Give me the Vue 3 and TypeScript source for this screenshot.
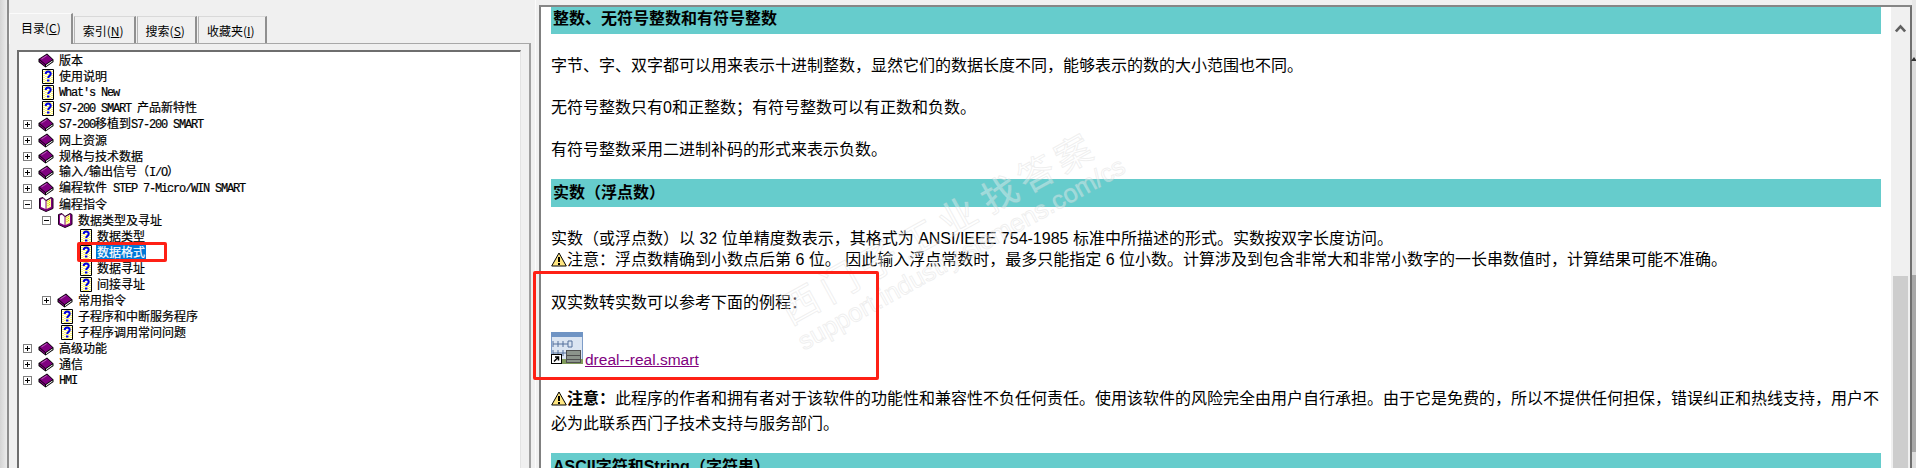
<script setup lang="ts">
type Kind = 'book' | 'open' | 'help'
interface Row {
  text: string
  level: number
  kind: Kind
  box?: '+' | '-'
  selected?: boolean
}

const rows: Row[] = [
  { text: '版本', level: 0, kind: 'book' },
  { text: '使用说明', level: 0, kind: 'help' },
  { text: "What's New", level: 0, kind: 'help' },
  { text: 'S7-200 SMART 产品新特性', level: 0, kind: 'help' },
  { text: 'S7-200移植到S7-200 SMART', level: 0, kind: 'book', box: '+' },
  { text: '网上资源', level: 0, kind: 'book', box: '+' },
  { text: '规格与技术数据', level: 0, kind: 'book', box: '+' },
  { text: '输入/输出信号（I/O）', level: 0, kind: 'book', box: '+' },
  { text: '编程软件 STEP 7-Micro/WIN SMART', level: 0, kind: 'book', box: '+' },
  { text: '编程指令', level: 0, kind: 'open', box: '-' },
  { text: '数据类型及寻址', level: 1, kind: 'open', box: '-' },
  { text: '数据类型', level: 2, kind: 'help' },
  { text: '数据格式', level: 2, kind: 'help', selected: true },
  { text: '数据寻址', level: 2, kind: 'help' },
  { text: '间接寻址', level: 2, kind: 'help' },
  { text: '常用指令', level: 1, kind: 'book', box: '+' },
  { text: '子程序和中断服务程序', level: 1, kind: 'help' },
  { text: '子程序调用常问问题', level: 1, kind: 'help' },
  { text: '高级功能', level: 0, kind: 'book', box: '+' },
  { text: '通信', level: 0, kind: 'book', box: '+' },
  { text: 'HMI', level: 0, kind: 'book', box: '+' },
]

const tabs = [
  { label: '目录', key: 'C', active: true },
  { label: '索引', key: 'N', active: false },
  { label: '搜索', key: 'S', active: false },
  { label: '收藏夹', key: 'I', active: false },
]

function parts(text: string): { t: string; latin: boolean }[] {
  return text
    .split(/([\x20-\x7e]+)/)
    .filter((s) => s.length > 0)
    .map((s) => ({ t: s, latin: /^[\x20-\x7e]+$/.test(s) }))
}
</script>

<template>
  <div class="app">
    <div class="edge"></div>

    <aside class="nav">
      <div class="tabs">
        <div v-for="tab in tabs" :key="tab.key" class="tab" :class="{ active: tab.active }">
          {{ tab.label }}(<u>{{ tab.key }}</u>)
        </div>
      </div>
      <div class="panel">
        <div class="tree">
          <div
            v-for="row in rows"
            :key="row.text"
            class="row"
            :class="'lv' + row.level"
          >
            <span class="box">
              <svg v-if="row.box" width="9" height="9" viewBox="0 0 9 9">
                <rect x=".5" y=".5" width="8" height="8" fill="#fff" stroke="#808080" />
                <path d="M2 4.500h5" stroke="#000" />
                <path v-if="row.box === '+'" d="M4.500 2v5" stroke="#000" />
              </svg>
            </span>
            <span class="ico">
              <svg v-if="row.kind === 'book'" width="16" height="15" viewBox="0 0 16 15">
                <path d="M.5 6 9 .5l6.500 6v2.500l-8 5.500-7-5.500z" fill="#000" />
                <path d="M1.500 6 9 1.500 14.500 6.500l-7 4.800z" fill="#800080" />
                <path d="M1.500 7 7 11.800v1.500L1.500 8.600z" fill="#800080" />
                <path d="m8 12 6.500-4.400v1L8 13.200z" fill="#fff" />
                <path d="M3.500 6 8.800 2.600" stroke="#b860b8" />
              </svg>
              <svg v-else-if="row.kind === 'open'" width="16" height="15" viewBox="0 0 16 15">
                <path d="M1.500 1.500 5 .5l3 3 5-3 2 1v10l-7 3-6.500-3z" fill="#800080" stroke="#200020" />
                <path d="M3 2.500 5 1.500l2.500 2.500v8L3 10z" fill="#fff" />
                <path d="M8.500 4 13 1.500V10l-4.500 2z" fill="#ffffa0" />
                <path d="M10 4v6M11.500 3v6" stroke="#d8d800" stroke-dasharray="1 1" />
              </svg>
              <svg v-else width="12" height="15" viewBox="0 0 12 15">
                <path d="M.5 .5h11v14H.5z" fill="#fff" stroke="#000" />
                <path d="M2 2v11M4 1v13M6 1v13M8 1v13M10 2v11" stroke="#ffee00" stroke-width="1.100" stroke-dasharray="1 1" />
                <path d="M3.700 5c0-3.500 5-3.500 5 0 0 1.800-2.500 2-2.500 4" fill="none" stroke="#0000e0" stroke-width="2" />
                <path d="M5 10.500h2.400v2H5z" fill="#0000e0" />
              </svg>
            </span>
            <span class="label" :class="{ selected: row.selected }"><template v-for="(p, i) in parts(row.text)" :key="i"><span v-if="p.latin" class="latin">{{ p.t }}</span><template v-else>{{ p.t }}</template></template></span>
          </div>
        </div>
      </div>
    </aside>
    <div class="divider"></div>

    <main class="doc">
      <div class="page">
        <h2 class="band first">整数、无符号整数和有符号整数</h2>
        <p class="gap21">字节、字、双字都可以用来表示十进制整数，显然它们的数据长度不同，能够表示的数的大小范围也不同。</p>
        <p class="gap21">无符号整数只有0和正整数；有符号整数可以有正数和负数。</p>
        <p class="gap21">有符号整数采用二进制补码的形式来表示负数。</p>

        <h2 class="band second">实数（浮点数）</h2>
        <p class="gap21">实数（或浮点数）以 32 位单精度数表示，其格式为 ANSI/IEEE 754-1985 标准中所描述的形式。实数按双字长度访问。<br />
          <svg class="warn" width="16" height="15" viewBox="0 0 16 15">
            <path d="M8 1 15.300 14H.7z" fill="#ffe680" stroke="#000" stroke-linejoin="round" />
            <path d="M8 5v5" stroke="#000" stroke-width="2" />
            <path d="M7 11h2v2H7z" fill="#000" />
          </svg>注意：浮点数精确到小数点后第 6 位。 因此输入浮点常数时，最多只能指定 6 位小数。计算涉及到包含非常大和非常小数字的一长串数值时，计算结果可能不准确。</p>
        <p class="gap22">双实数转实数可以参考下面的例程：</p>
        <div class="attachment">
          <svg width="32" height="32" viewBox="0 0 32 32">
            <rect width="32" height="32" fill="#dbe5f2" />
            <rect x=".5" y=".5" width="31" height="31" fill="none" stroke="#7d9cc8" />
            <rect width="32" height="5" fill="#6f94c4" />
            <path d="M2 9v6M2 12h15M7 9v6M12 9v6M17 9h4v6h-4zM2 18v6M2 21h13M7 18v6M12 18v6" fill="none" stroke="#54709c" />
            <rect y="27" width="32" height="5" fill="#7f9a5a" />
            <rect x="15.500" y="18.500" width="14" height="12" fill="#8c948c" stroke="#505050" />
            <path d="M15.500 23.500h14M15.500 27.500h14" stroke="#505050" />
            <rect x=".5" y="22.500" width="10" height="9" fill="#fff" stroke="#000" />
            <path d="M3 29.500 7 25.500M4 25h3.500v3.500" fill="none" stroke="#000" stroke-width="1.500" />
          </svg>
          <a class="link">dreal--real.smart</a>
        </div>
        <p class="note">
          <svg class="warn" width="16" height="15" viewBox="0 0 16 15">
            <path d="M8 1 15.300 14H.7z" fill="#ffe680" stroke="#000" stroke-linejoin="round" />
            <path d="M8 5v5" stroke="#000" stroke-width="2" />
            <path d="M7 11h2v2H7z" fill="#000" />
          </svg><b>注意：</b>此程序的作者和拥有者对于该软件的功能性和兼容性不负任何责任。使用该软件的风险完全由用户自行承担。由于它是免费的，所以不提供任何担保，错误纠正和热线支持，用户不必为此联系西门子技术支持与服务部门。</p>
        <h2 class="band third">ASCII字符和String（字符串）</h2>
      </div>
      <div class="scrollbar">
        <svg class="chevron" width="11" height="9" viewBox="0 0 11 9">
          <path d="M.9 7.500 5.500 2.400l4.600 5.100" fill="none" stroke="#606060" stroke-width="2.600" />
        </svg>
        <div class="thumb"></div>
      </div>
    </main>

    <div class="outer-bar">
      <div class="outer-top"></div>
      <div class="outer-arrow"></div>
      <div class="outer-thumb"></div>
    </div>

    <div class="mark">
      <div class="mark-top"><span>西门子工业</span><span class="mark-ans">找答案</span></div>
      <div class="mark-url">support.industry.siemens.com/cs</div>
    </div>
    <div class="callout tree-callout"></div>
    <div class="callout doc-callout"></div>
  </div>
</template>

<style>
html,
body {
  margin: 0;
  background: #f0f0f0;
}
</style>

<style scoped>
.app {
  position: relative;
  display: flex;
  width: 1916px;
  height: 468px;
  overflow: hidden;
  background: #f0f0f0;
  color: #000;
  font-family: "Liberation Sans", "Noto Sans CJK SC", sans-serif;
}

.edge {
  flex: none;
  width: 7px;
  border-right: 2px solid #8c8c8c;
  background: linear-gradient(90deg, #d4d4d4, #ececec);
}

.nav {
  flex: none;
  width: 526px;
  padding-top: 13px;
  box-sizing: border-box;
  display: flex;
  flex-direction: column;
}

.divider {
  flex: none;
  width: 1px;
  margin-right: 3px;
  background: #fbfbfb;
}

.tabs {
  flex: none;
  display: flex;
  align-items: flex-start;
  gap: 1px;
  height: 30px;
  position: relative;
  z-index: 1;
}

.tab {
  margin-top: 3px;
  height: 27px;
  padding: 0 10px 0 8px;
  box-sizing: border-box;
  font: 12px/27px "Noto Sans CJK SC", sans-serif;
  border: 1px solid #b4b4b4;
  border-top-color: #d9d9d9;
  border-right: 2px solid #8f8f8f;
  border-bottom: none;
  background: #f0f0f0;
}

.tab.active {
  margin-top: 0;
  height: 31px;
  padding: 0 10px 0 11px;
  line-height: 28px;
  border-color: #fbfbfb;
  border-right-color: #8f8f8f;
}

.panel {
  flex: 1;
  width: 522px;
  box-sizing: border-box;
  padding: 6px 8px 0;
  border-top: 1px solid #a8a8a8;
  border-right: 2px solid #a0a0a0;
  overflow: hidden;
}

.tree {
  height: 420px;
  border-top: 2px solid #6e6e6e;
  border-left: 2px solid #6e6e6e;
  border-right: 1px solid #e3e3e3;
  background: #fff;
}

.row {
  display: flex;
  align-items: center;
  height: 16px;
  padding-left: 4px;
  font: 12px/16px "Noto Sans CJK SC", sans-serif;
  -webkit-text-stroke: 0.2px currentColor;
  white-space: nowrap;
}

.row.lv1 {
  padding-left: 23px;
}

.row.lv2 {
  padding-left: 42px;
}

.box {
  flex: none;
  width: 9px;
  height: 9px;
  display: flex;
  margin-right: 6px;
}

.ico {
  flex: none;
  width: 16px;
  height: 15px;
  display: flex;
  justify-content: flex-end;
  margin-right: 4px;
}

.label {
  padding: 0 1px;
  line-height: 14px;
}

.label.selected {
  background: #0078d7;
  color: #fff;
}

.latin {
  font-family: "Liberation Mono", monospace;
  font-size: 12px;
  letter-spacing: -1.2px;
}

.doc {
  flex: 1;
  margin-top: 5px;
  display: flex;
  border-top: 2px solid #868686;
  border-left: 2px solid #808080;
  border-right: 2px solid #707070;
  min-width: 0;
}

.page {
  flex: 1;
  min-width: 0;
  padding: 0 10px;
  background: #fff;
  font-size: 16px;
  line-height: 21px;
  overflow: hidden;
}

.page p {
  margin: 0;
}

.band {
  margin: 0;
  padding-left: 2px;
  font-size: 16px;
  font-weight: 700;
  background: #66cccc;
}

.band.first {
  height: 27px;
  line-height: 24px;
}

.band.second {
  margin-top: 19px;
  height: 28px;
  line-height: 28px;
}

.band.third {
  margin-top: 17px;
  height: 28px;
  line-height: 28px;
}

.gap21 {
  padding-top: 21px;
}

.gap22 {
  padding-top: 22px;
}

.warn {
  vertical-align: -2px;
}

.attachment {
  margin-top: 19px;
  height: 32px;
  display: flex;
  align-items: flex-end;
  gap: 2px;
}

.link {
  color: #800080;
  font-size: 15.5px;
  text-decoration: underline;
  line-height: 14px;
  margin-bottom: -3px;
  cursor: pointer;
}

.note {
  padding-top: 22px;
  line-height: 25px;
}

.scrollbar {
  flex: none;
  width: 19px;
  display: flex;
  flex-direction: column;
  align-items: center;
  background: #f0f0f0;
}

.chevron {
  margin-top: 17px;
  flex: none;
}

.thumb {
  margin-top: auto;
  width: 15px;
  height: 192px;
  background: #cdcdcd;
}

.outer-bar {
  flex: none;
  width: 4px;
  display: flex;
  flex-direction: column;
  background: #dcdcdc;
}

.outer-top {
  height: 50px;
  background: #e8e8e8;
}

.outer-arrow {
  margin: 7px 0 0 -1px;
  width: 0;
  height: 0;
  border: 3px solid transparent;
  border-top: none;
  border-bottom: 4px solid #333;
}

.outer-thumb {
  margin-top: 214px;
  height: 177px;
  background: #a8a8a8;
}

.mark {
  position: absolute;
  left: 807px;
  top: 284px;
  transform: rotate(-29deg);
  transform-origin: left bottom;
  pointer-events: none;
  white-space: nowrap;
  color: rgba(255, 255, 255, 0.35);
  -webkit-text-stroke: 1px rgba(210, 210, 210, 0.35);
}

.mark-top {
  display: flex;
  height: 42px;
  font: 400 38px/42px "Noto Sans CJK SC", sans-serif;
  letter-spacing: 7px;
}

.mark-ans {
  margin-left: 4px;
  font-size: 36px;
  letter-spacing: 6px;
}

.mark-url {
  font: 400 25.5px/30px "Liberation Sans", sans-serif;
}

.callout {
  position: absolute;
  box-sizing: border-box;
  border: 3px solid #fe2015;
  border-radius: 2px;
  pointer-events: none;
}

.tree-callout {
  left: 77px;
  top: 242px;
  width: 90px;
  height: 20px;
}

.doc-callout {
  left: 533px;
  top: 271px;
  width: 346px;
  height: 109px;
}
</style>
